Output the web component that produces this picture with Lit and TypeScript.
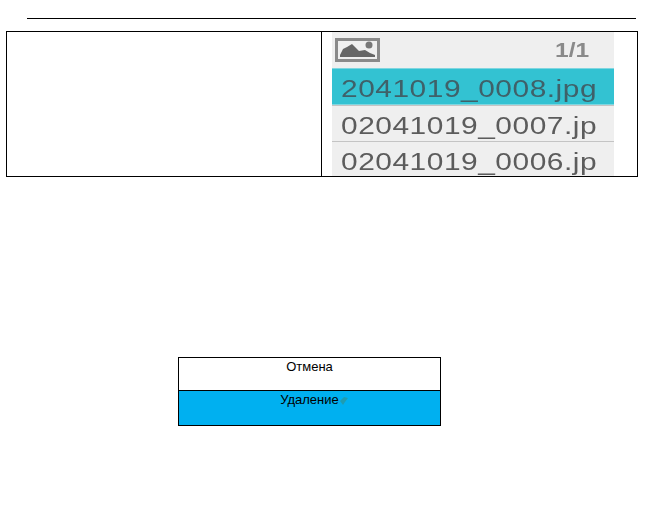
import { LitElement, css, html } from 'lit';
import { customElement } from 'lit/decorators.js';

const files = [
  { name: '2041019_0008.jpg', active: true },
  { name: '02041019_0007.jp', active: false },
  { name: '02041019_0006.jp', active: false },
];

@customElement('app-root')
export class AppRoot extends LitElement {
  static get styles() {
    return css`
      :host {
        display: block;
        width: 652px;
        height: 512px;
        background: #fff;
        font-family: "Liberation Sans", Arial, sans-serif;
        color: #000;
        overflow: hidden;
      }
      .rule {
        height: 1px;
        margin: 18px 16px 0 27px;
        background: #000;
      }
      .table {
        display: grid;
        grid-template-columns: 315px 1fr;
        width: 632px;
        height: 146px;
        margin: 12px 0 0 6px;
        box-sizing: border-box;
        border: 1px solid #000;
      }
      .empty {
        border-right: 1px solid #000;
      }
      .shot {
        width: 282px;
        margin-left: 10px;
        display: flex;
        flex-direction: column;
        background: #efefef;
        overflow: hidden;
      }
      .head {
        height: 36px;
        flex: none;
        display: flex;
        align-items: center;
        justify-content: space-between;
        padding: 0 25px 0 3px;
        color: #8a8a8a;
        font-weight: bold;
        font-size: 21px;
      }
      .head svg {
        display: block;
        filter: blur(0.4px);
      }
      .head span {
        display: inline-block;
        transform-origin: right center;
        transform: scaleX(1.17);
        filter: blur(0.4px);
      }
      .row {
        height: 35px;
        flex: none;
        box-sizing: border-box;
        padding: 5px 0 0 9px;
        display: flex;
        align-items: center;
        font-size: 23px;
        color: #5c5c5c;
        white-space: nowrap;
      }
      .row + .row {
        height: 36px;
        border-top: 1px solid #c4c4c4;
      }
      .row span {
        display: inline-block;
        letter-spacing: 0.4px;
        transform-origin: left center;
        transform: scaleX(1.3);
        filter: blur(0.4px);
      }
      .row.active {
        height: 37px;
        background: #33c2d2;
        color: #3f6169;
        border-top: 1px solid #7fd6e0;
        border-bottom: 1px solid #7fd6e0;
      }
      .dialog {
        width: 263px;
        height: 69px;
        margin: 180px 0 0 178px;
        box-sizing: border-box;
        border: 1px solid #000;
        display: flex;
        flex-direction: column;
        font-size: 13px;
        text-align: center;
      }
      .cancel {
        height: 33px;
        flex: none;
        padding-top: 1px;
        box-sizing: border-box;
        border-bottom: 1px solid #000;
      }
      .delete {
        flex: 1;
        background: #00b0f0;
        padding: 1px 0 0 10px;
      }
      .speck {
        display: inline-block;
        vertical-align: -2px;
      }
    `;
  }

  render() {
    return html`
      <div class="rule"></div>
      <div class="table">
        <div class="empty"></div>
        <div class="shot">
          <div class="head">
            <svg width="45" height="24" viewBox="0 0 45 24">
              <rect x="1.5" y="1.5" width="42" height="21" fill="#efefef" stroke="#8a8a8a" stroke-width="3"/>
              <path d="M5 19 L5 17 L8 11 L12 9 L17 6 L21 10 L24 13 L30 12 L35 15 L40 17 L40 19 Z" fill="#666"/>
              <circle cx="34" cy="7" r="3.5" fill="#777"/>
            </svg>
            <span>1/1</span>
          </div>
          ${files.map(f => html`
            <div class="row ${f.active ? 'active' : ''}"><span>${f.name}</span></div>
          `)}
        </div>
      </div>
      <div class="dialog">
        <div class="cancel">Отмена</div>
        <div class="delete">Удаление<svg class="speck" width="10" height="11" viewBox="0 0 10 11"><path d="M1 6 L5 2 L9 3 L6 7 L4 10 Z" fill="#1f9cb0"/></svg></div>
      </div>
    `;
  }
}
